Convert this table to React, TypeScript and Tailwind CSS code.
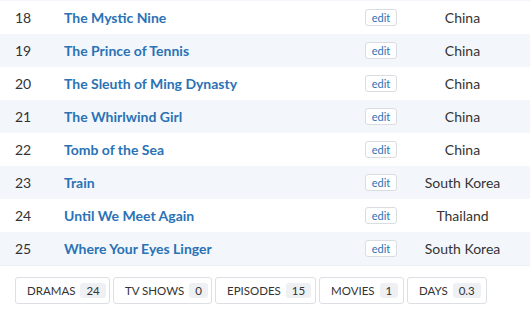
const rows = [
  { n: 18, title: "The Mystic Nine", country: "China" },
  { n: 19, title: "The Prince of Tennis", country: "China" },
  { n: 20, title: "The Sleuth of Ming Dynasty", country: "China" },
  { n: 21, title: "The Whirlwind Girl", country: "China" },
  { n: 22, title: "Tomb of the Sea", country: "China" },
  { n: 23, title: "Train", country: "South Korea" },
  { n: 24, title: "Until We Meet Again", country: "Thailand" },
  { n: 25, title: "Where Your Eyes Linger", country: "South Korea" },
];

const stats = [
  { label: "DRAMAS", value: "24", w: "w-[95px]" },
  { label: "TV SHOWS", value: "0", w: "w-[99px]" },
  { label: "EPISODES", value: "15", w: "w-[101px]" },
  { label: "MOVIES", value: "1", w: "w-[85px]" },
  { label: "DAYS", value: "0.3", w: "w-[80px]" },
];

export default function App() {
  return (
    <div className="w-[530px] h-[324px] bg-white text-[14px] text-[#333] font-['Lato','Noto_Sans',sans-serif] overflow-hidden">
      <div className="h-px bg-[#f3f7fb]" />
      <div className="border-b border-[#eceff3]">
        {rows.map((r, i) => (
          <div
            key={r.n}
            className={`flex items-center h-[33px] ${i % 2 === 1 ? "bg-[#f3f7fb]" : "bg-white"}`}
          >
            <div className="w-[64px] pl-[15px]">{r.n}</div>
            <div className="w-[301px] font-bold text-[#2a72b5]">{r.title}</div>
            <div className="w-[40px]">
              <span className="flex items-center justify-center w-[32px] h-[17px] border border-[#d9dce0] rounded-[3px] bg-white text-[11px] text-[#2a72b5] leading-none">
                edit
              </span>
            </div>
            <div className="w-[115px] text-center">{r.country}</div>
          </div>
        ))}
      </div>
      <div className="flex gap-[3px] pl-[15px] pt-[11px]">
        {stats.map((s) => (
          <div
            key={s.label}
            className={`${s.w} h-[27px] flex items-center gap-[5px] pl-[11px] border border-[#dcdfe3] rounded-[3px] text-[11.5px] text-[#333]`}
          >
            <span>{s.label}</span>
            <span className="px-[6px] h-[15px] flex items-center rounded-[3px] bg-[#eef0f3]">{s.value}</span>
          </div>
        ))}
      </div>
    </div>
  );
}
